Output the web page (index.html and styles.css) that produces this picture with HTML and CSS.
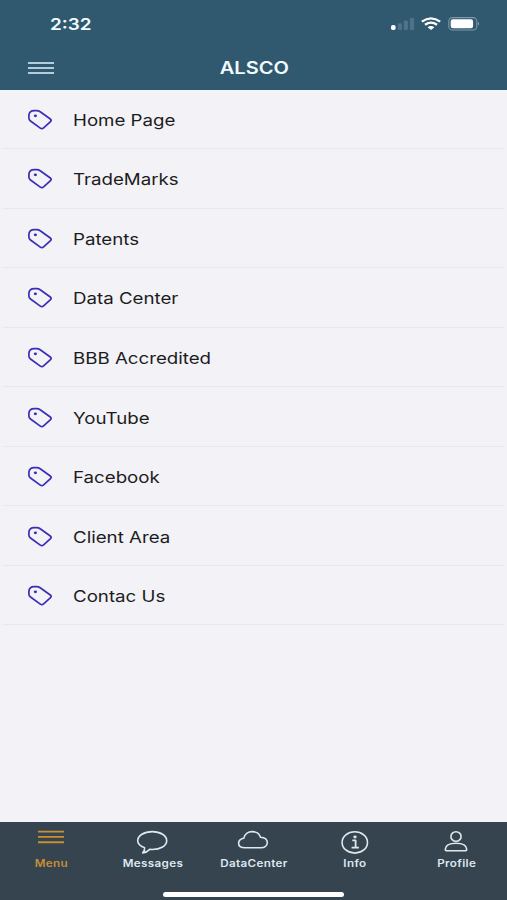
FILE: index.html
```html
<!DOCTYPE html>
<html lang="en">
<head>
<meta charset="utf-8">
<title>ALSCO</title>
<link rel="stylesheet" href="styles.css">
</head>
<body>
<svg class="defs" aria-hidden="true">
  <symbol id="tag" viewBox="0 0 26 22">
    <path d="M1.9 8.9V6.4C2 3.4 4.2 1.6 7.4 1.6H9.6Q11.6 1.6 13.2 2.8L23.3 10Q25 11.3 23.5 12.6L16.6 18.9Q15 20.3 13.3 19.1L3.5 12Q1.9 10.8 1.9 8.9Z" fill="none" stroke="#3a2eb8" stroke-width="1.7" stroke-linejoin="round"/>
    <ellipse cx="8.4" cy="6.8" rx="1.6" ry="1.4" fill="#3a2eb8"/>
  </symbol>
</svg>
<div class="app">
  <header class="header">
    <div class="status">
      <span class="time"><span class="wide">2:32</span></span>
      <svg class="indicators" width="92" height="16" viewBox="0 0 92 16">
        <rect x="3" y="9" width="4.6" height="5" rx="1.8" fill="#fff"/>
        <g fill="#4e7288"><rect x="9.9" y="7.2" width="4" height="6.8" rx="1"/><rect x="15.9" y="4.6" width="4" height="9.4" rx="1"/><rect x="21.9" y="2" width="4.2" height="12" rx="1"/></g>
        <g fill="none" stroke="#fff" stroke-width="2.3"><path d="M33.8 5.6Q43 -1 52.2 5.6"/><path d="M37 8.8Q43 4.4 49 8.8"/></g>
        <path d="M39.6 11.3Q43 8.9 46.4 11.3L43 14Z" fill="#fff"/>
        <rect x="60.8" y="1.6" width="28" height="12.4" rx="3.8" fill="none" stroke="#7d99aa" stroke-width="1.1"/>
        <rect x="62.7" y="3.3" width="22.4" height="8.9" rx="2.2" fill="#fff"/>
        <path d="M90 5.8Q92 7.8 90 9.8Z" fill="#93aab8"/>
      </svg>
    </div>
    <div class="titlebar">
      <svg class="burger" width="28" height="14" viewBox="0 0 28 14"><path d="M1 2H27M1 7H27M1 12H27" stroke="#b4cddc" stroke-width="1.9"/></svg>
      <h1 class="title"><span class="wide">ALSCO</span></h1>
    </div>
  </header>
  <main class="list">
    <a class="row"><svg class="tag"><use href="#tag"/></svg><span class="label">Home Page</span></a>
    <a class="row"><svg class="tag"><use href="#tag"/></svg><span class="label">TradeMarks</span></a>
    <a class="row"><svg class="tag"><use href="#tag"/></svg><span class="label">Patents</span></a>
    <a class="row"><svg class="tag"><use href="#tag"/></svg><span class="label">Data Center</span></a>
    <a class="row"><svg class="tag"><use href="#tag"/></svg><span class="label">BBB Accredited</span></a>
    <a class="row"><svg class="tag"><use href="#tag"/></svg><span class="label">YouTube</span></a>
    <a class="row"><svg class="tag"><use href="#tag"/></svg><span class="label">Facebook</span></a>
    <a class="row"><svg class="tag"><use href="#tag"/></svg><span class="label">Client Area</span></a>
    <a class="row"><svg class="tag"><use href="#tag"/></svg><span class="label">Contac Us</span></a>
  </main>
  <footer class="footer">
    <nav class="tabs">
      <a class="tab active"><svg class="icon" viewBox="0 0 34 26"><path d="M4 2.6H30M4 7.9H30M4 13.2H30" stroke-width="1.9"/></svg><span class="caption">Menu</span></a>
      <a class="tab"><svg class="icon" viewBox="0 0 34 26"><path d="M9.6 18.7C5 17 2.7 14.5 2.7 11.7C2.7 6.7 9 2.6 17.3 2.6S31.7 6.7 31.7 11.7S25.5 20.5 17.3 20.5L14.7 20.4Q11.8 23.5 7.7 23.9Q10 21.8 9.6 18.7Z"/></svg><span class="caption">Messages</span></a>
      <a class="tab"><svg class="icon" viewBox="0 0 34 26"><path d="M9 18.8C4.8 18.8 2.6 17 2.6 14.2C2.6 11.5 4.8 9.7 7.8 9.2C8.6 5.3 12 2.6 16.3 2.6C20.3 2.6 23.4 4.9 24.5 8.2C28.7 8.5 31.3 10.5 31.3 13.6C31.3 16.8 28.6 18.8 24.8 18.8Z"/></svg><span class="caption">DataCenter</span></a>
      <a class="tab"><svg class="icon" viewBox="0 0 34 26"><ellipse cx="16.8" cy="13.4" rx="12.7" ry="10.7"/><path d="M14.3 11.4H17.6V18.5M13.6 18.7H20.9" stroke-width="1.8"/><ellipse cx="17" cy="8" rx="1.7" ry="1.4" class="dot"/></svg><span class="caption">Info</span></a>
      <a class="tab"><svg class="icon" viewBox="0 0 34 26"><ellipse cx="17" cy="7.5" rx="5.1" ry="4.8"/><path d="M6.3 20.2C6.6 16.3 11 14.3 17 14.3S27.4 16.3 27.7 20.2Q27.8 21.8 26 21.8H8Q6.2 21.8 6.3 20.2Z"/></svg><span class="caption">Profile</span></a>
    </nav>
    <div class="home-indicator"></div>
  </footer>
</div>
</body>
</html>
```
FILE: styles.css
```css
* { box-sizing: border-box; }

body {
  margin: 0;
  background: #f2f2f7;
  color: #1c1c20;
  font-family: Inter, "Liberation Sans", sans-serif;
}

.defs {
  display: block;
  width: 0;
  height: 0;
}

.app {
  display: flex;
  flex-direction: column;
  width: 507px;
  height: 900px;
  overflow: hidden;
}

.header {
  height: 89.5px;
  background: #30586f;
  color: #f2fbff;
}

.status {
  display: flex;
  align-items: center;
  justify-content: space-between;
  height: 47px;
  padding: 0 26px 0 50px;
}

.time {
  font-size: 16px;
  font-weight: 600;
}

.wide {
  display: inline-block;
  transform: scaleX(1.18);
}

.time .wide { transform-origin: left; }

.indicators { margin-right: 0.8px; }

.titlebar {
  display: grid;
  grid-template-columns: 1fr auto 1fr;
  align-items: center;
  height: 42px;
  padding: 0 26.5px 0 27.5px;
}

.burger { margin-left: -0.5px; }

.title {
  margin: 0;
  font-size: 17px;
  font-weight: 600;
}

.list {
  flex: 1;
  padding: 0 3px;
}

.row {
  display: flex;
  align-items: center;
  gap: 18px;
  height: 59.56px;
  padding: 2px 0 0 24px;
  border-bottom: 1px solid #e8e8ec;
}

.tag {
  flex: none;
  width: 26px;
  height: 22px;
}

.label {
  margin-left: 2px;
  font-size: 16px;
  transform: scaleX(1.168);
  transform-origin: left;
}

.footer {
  height: 78.5px;
  background: #35444f;
  color: #dfe8ef;
}

.tabs {
  display: grid;
  grid-template-columns: repeat(5, 1fr);
  height: 70px;
}

.tab {
  display: flex;
  flex-direction: column;
  align-items: center;
  padding-top: 7px;
}

.tab.active { color: #c88f35; }

.icon {
  width: 34px;
  height: 26px;
  fill: none;
  stroke: currentColor;
  stroke-width: 1.6;
  stroke-linejoin: round;
}

.dot {
  fill: currentColor;
  stroke: none;
}

.caption {
  margin: 2px 0 0 0.8px;
  font-size: 10px;
  font-weight: 600;
  line-height: 13px;
  letter-spacing: 0.3px;
  transform: scaleX(1.165);
}

.home-indicator {
  width: 181px;
  height: 5.5px;
  margin: 0 auto;
  border-radius: 3px;
  background: #fff;
}
```
